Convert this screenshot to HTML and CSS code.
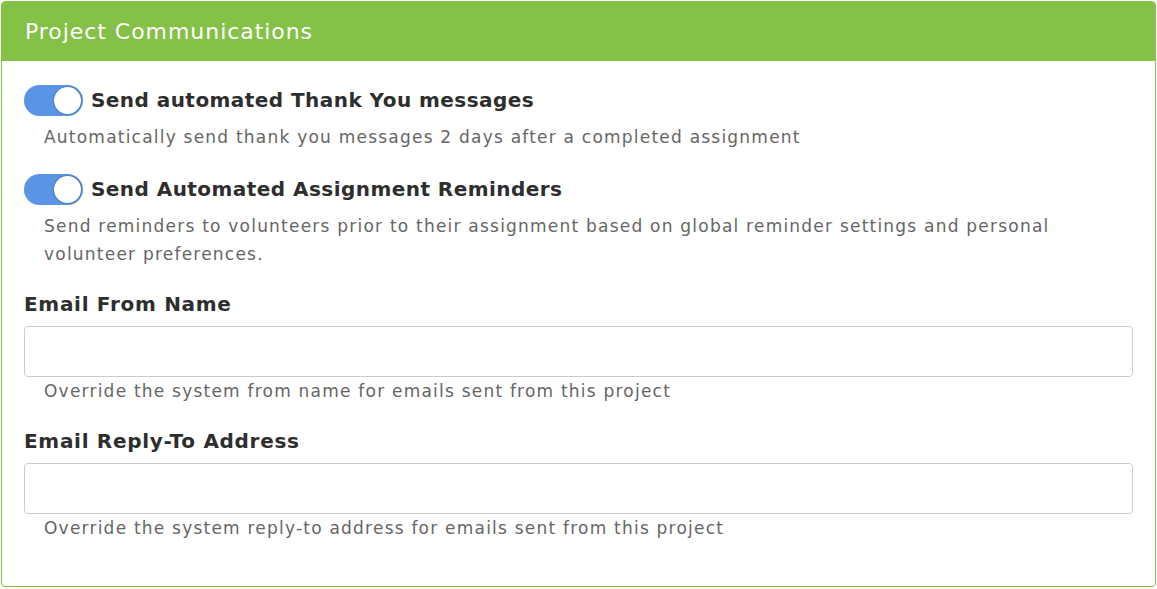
FILE: index.html
```html
<!DOCTYPE html>
<html>
<head>
<meta charset="utf-8">
<link rel="stylesheet" href="styles.css">
</head>
<body>
<div class="panel">
  <div class="panel-header">Project Communications</div>
  <div class="panel-body">
    <div class="setting">
      <div class="toggle-row">
        <span class="toggle"><span class="knob"></span></span>
        <span class="toggle-label">Send automated Thank You messages</span>
      </div>
      <p class="help">Automatically send thank you messages 2 days after a completed assignment</p>
    </div>
    <div class="setting">
      <div class="toggle-row">
        <span class="toggle"><span class="knob"></span></span>
        <span class="toggle-label">Send Automated Assignment Reminders</span>
      </div>
      <p class="help">Send reminders to volunteers prior to their assignment based on global reminder settings and personal volunteer preferences.</p>
    </div>
    <div class="field">
      <label class="field-label">Email From Name</label>
      <input class="input" type="text">
      <p class="help">Override the system from name for emails sent from this project</p>
    </div>
    <div class="field">
      <label class="field-label">Email Reply-To Address</label>
      <input class="input" type="text">
      <p class="help">Override the system reply-to address for emails sent from this project</p>
    </div>
  </div>
</div>
</body>
</html>
```

FILE: styles.css
```css
html, body {
  margin: 0;
  padding: 0;
  background: #ffffff;
}
body {
  padding: 1px 1px 0 1px;
  font-family: "DejaVu Sans", Verdana, sans-serif;
  color: #333333;
}
.panel {
  width: 1155px;
  height: 586px;
  box-sizing: border-box;
  border: 1px solid #84c147;
  border-radius: 4px;
  overflow: hidden;
  background: #fff;
}
.panel-header {
  background: #84c147;
  color: #ffffff;
  height: 59px;
  display: flex;
  align-items: center;
  padding-left: 23px;
  font-size: 22px;
  letter-spacing: 0.95px;
}
.panel-body {
  padding: 24px 22px 0 22px;
  display: flex;
  flex-direction: column;
}
.setting + .setting {
  margin-top: 23px;
}
.toggle-row {
  display: flex;
  align-items: center;
  gap: 8px;
  height: 31px;
  margin-top: -1px;
}
.toggle {
  width: 59px;
  height: 31px;
  border-radius: 16px;
  background: #5a94e4;
  display: flex;
  align-items: center;
  justify-content: flex-end;
  padding-right: 2px;
  box-sizing: border-box;
  margin-top: 1px;
}
.knob {
  width: 27px;
  height: 27px;
  border-radius: 50%;
  background: #fff;
  box-shadow: 0 0 2px rgba(0,0,0,0.45);
}
.toggle-label {
  font-weight: bold;
  font-size: 20px;
  letter-spacing: 0.45px;
  color: #2e2e2e;
}
.help {
  margin: 8px 0 0 20px;
  font-size: 17px;
  letter-spacing: 1.22px;
  line-height: 28px;
  color: #666666;
}
.field {
  display: flex;
  flex-direction: column;
  margin-top: 22px;
}
.field-label {
  font-weight: bold;
  font-size: 20px;
  letter-spacing: 0.7px;
  color: #2e2e2e;
  line-height: 28px;
}
.input {
  margin: 8px 0 0 0;
  height: 51px;
  box-sizing: border-box;
  border: 1px solid #cccccc;
  border-radius: 4px;
  width: 1109px;
}
.field .help {
  margin-top: 0;
}
```
